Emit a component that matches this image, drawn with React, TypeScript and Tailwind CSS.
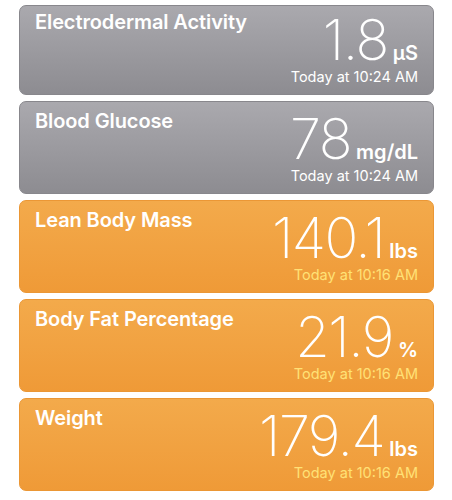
import React from "react";

type Item = {
  title: string;
  value: string;
  unit: string;
  time: string;
  kind: "gray" | "orange";
};

const items: Item[] = [
  { title: "Electrodermal Activity", value: "1.8", unit: "µS", time: "Today at 10:24 AM", kind: "gray" },
  { title: "Blood Glucose", value: "78", unit: "mg/dL", time: "Today at 10:24 AM", kind: "gray" },
  { title: "Lean Body Mass", value: "140.1", unit: "lbs", time: "Today at 10:16 AM", kind: "orange" },
  { title: "Body Fat Percentage", value: "21.9", unit: "%", time: "Today at 10:16 AM", kind: "orange" },
  { title: "Weight", value: "179.4", unit: "lbs", time: "Today at 10:16 AM", kind: "orange" },
];

function Card({ item, first }: { item: Item; first: boolean }) {
  const gray = item.kind === "gray";
  return (
    <div
      className={
        "flex justify-between rounded-[7px] border px-[15px] " +
        (first ? "h-[90px] " : "h-[93px] ") +
        (gray
          ? "border-[#88878c] bg-gradient-to-b from-[#aaa9ae] to-[#8d8c91]"
          : "border-[#eb9735] bg-gradient-to-b from-[#f3aa4b] to-[#ef9a37]")
      }
    >
      <div
        className={
          "text-[20px] leading-[24px] font-semibold tracking-[-0.1px] text-white " +
          (first ? "pt-[4px]" : "pt-[7px]")
        }
      >
        {item.title}
      </div>
      <div className={"flex flex-col items-end " + (first ? "pt-[11px]" : "pt-[14px]")}>
        <div className="flex items-baseline gap-[5px] text-white">
          <span className="text-[56px] leading-[46px] font-extralight tracking-[-1.5px]">{item.value}</span>
          <span className="text-[20px] leading-[20px] font-semibold">{item.unit}</span>
        </div>
        <div
          className={
            "mt-[7px] text-[14.5px] leading-[14px] font-normal " +
            (gray ? "text-white" : "text-[#ffe176]")
          }
        >
          {item.time}
        </div>
      </div>
    </div>
  );
}

export default function App() {
  return (
    <div
      className="w-[452px] h-[500px] bg-white overflow-hidden"
      style={{ fontFamily: "Inter, 'Liberation Sans', sans-serif" }}
    >
      <div className="flex flex-col gap-[6px] pt-[5px] pl-[19px] w-[434px]">
        {items.map((it, i) => (
          <Card key={i} item={it} first={i === 0} />
        ))}
      </div>
    </div>
  );
}
